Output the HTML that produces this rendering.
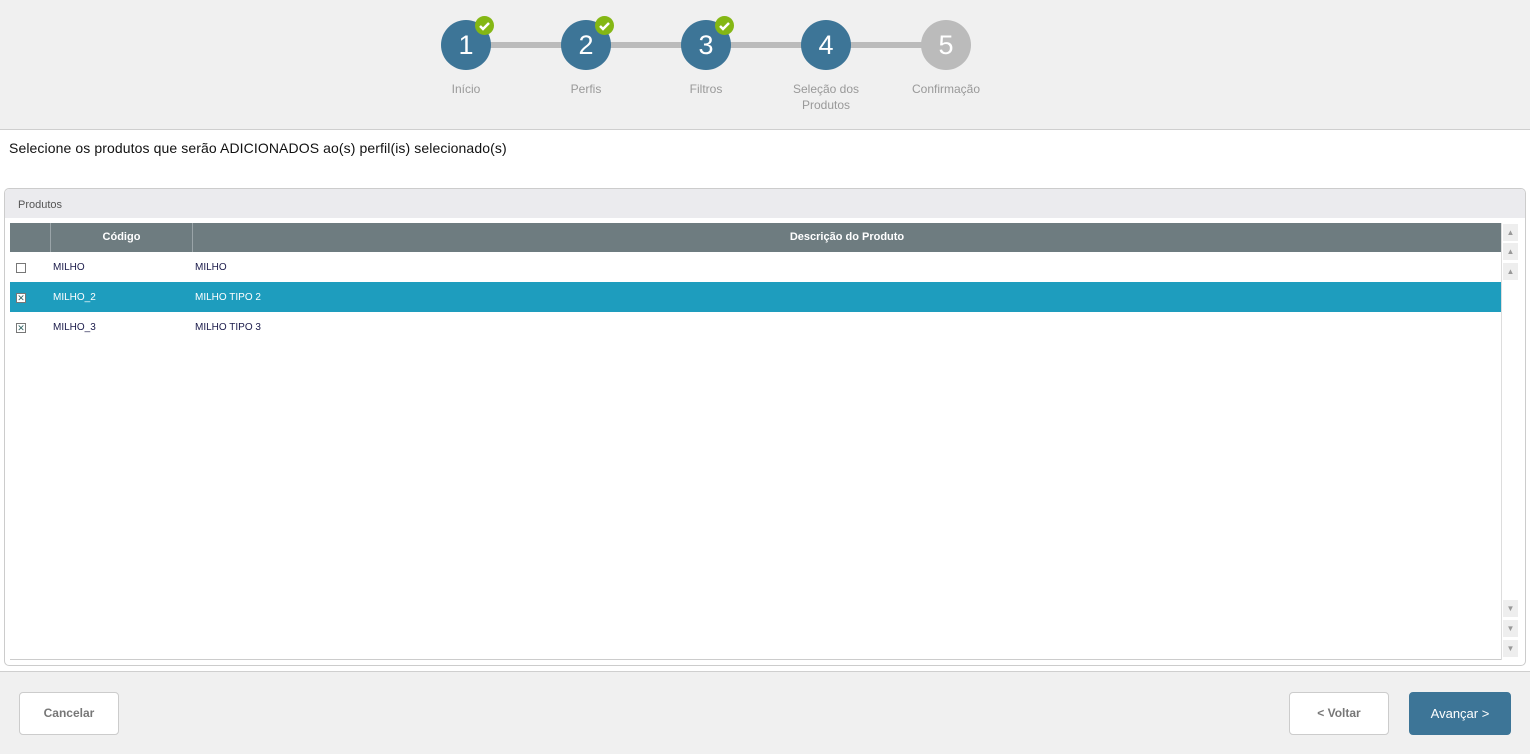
<!DOCTYPE html>
<html><head><meta charset="utf-8"><style>
*{box-sizing:border-box;margin:0;padding:0}
body{width:1530px;height:754px;background:#fff;font-family:"Liberation Sans",Arial,sans-serif;position:relative;overflow:hidden}
.hdr{position:absolute;left:0;top:0;width:1530px;height:130px;background:#f0f0f0;border-bottom:1px solid #cfcfcf}
.line{position:absolute;top:42px;height:6px;background:#bbb;left:466px;width:480px}
.c{position:absolute;top:20px;width:50px;height:50px;border-radius:50%;background:#3d7597;color:#fff;font-size:27px;text-align:center;line-height:50px}
.c.g{background:#bbb}
.ck{position:absolute;width:19px;height:19px;border-radius:50%;background:#84b714;top:16px}
.lb{position:absolute;top:81px;width:100px;text-align:center;color:#999;font-size:12px;line-height:16px}
.msg{position:absolute;left:9px;top:140px;font-size:14px;color:#111;letter-spacing:0.1px}
.panel{position:absolute;left:4px;top:188px;width:1522px;height:478px;border:1px solid #ccc;border-radius:5px;background:#fff;overflow:hidden}
.ph{height:29px;background:#ebebee;font-size:11px;color:#555;padding:10px 0 0 13px}
.gh{position:absolute;left:5px;top:34px;width:1491px;height:29px;background:#6e7c80;color:#fff;font-size:11px;font-weight:bold}
.gh div{position:absolute;top:0;height:29px;line-height:28px;text-align:center;border-left:1px solid #9aa4a8}
.row{position:absolute;left:5px;width:1491px;height:30px;font-size:10px;color:#1a1a4a}
.row span{position:absolute;top:10px}
.cb{position:absolute;left:6px;top:11px;width:10px;height:10px;border:1px solid #777;background:#fff}
.sel{background:#1e9dbe;color:#fff}
.sb{position:absolute;left:1496px;top:34px;width:17px;height:437px;background:#fff;border-left:1px solid #ddd}
.sbb{position:absolute;left:1px;width:15px;height:17px;background:#eee;color:#999;font-size:8px;text-align:center;line-height:17px}
.ftr{position:absolute;left:0;top:671px;width:1530px;height:83px;background:#f0f0f0;border-top:1px solid #cfcfcf}
.btn{position:absolute;top:20px;height:43px;border:1px solid #ccc;border-radius:4px;background:#fff;color:#777;font-weight:bold;font-size:12px;text-align:center;line-height:41px}
</style></head><body>
<div class="hdr">
<div class="line"></div>
<div class="c" style="left:441px">1</div><div class="c" style="left:561px">2</div><div class="c" style="left:681px">3</div><div class="c" style="left:801px">4</div><div class="c g" style="left:921px">5</div>
<svg class="ck" style="left:475px" viewBox="0 0 19 19"><path d="M5 10l3 3 6-6" stroke="#fff" stroke-width="2.5" fill="none"/></svg>
<svg class="ck" style="left:595px" viewBox="0 0 19 19"><path d="M5 10l3 3 6-6" stroke="#fff" stroke-width="2.5" fill="none"/></svg>
<svg class="ck" style="left:715px" viewBox="0 0 19 19"><path d="M5 10l3 3 6-6" stroke="#fff" stroke-width="2.5" fill="none"/></svg>
<div class="lb" style="left:416px">Início</div><div class="lb" style="left:536px">Perfis</div><div class="lb" style="left:656px">Filtros</div><div class="lb" style="left:776px">Seleção dos<br>Produtos</div><div class="lb" style="left:896px">Confirmação</div>
</div>
<div class="msg">Selecione os produtos que serão ADICIONADOS ao(s) perfil(is) selecionado(s)</div>
<div class="panel">
<div class="ph">Produtos</div>
<div class="gh"><div style="left:0;width:40px;border:none"></div><div style="left:40px;width:142px">Código</div><div style="left:182px;width:1309px">Descrição do Produto</div></div>
<div class="row" style="top:63px"><div class="cb"></div><span style="left:43px">MILHO</span><span style="left:185px">MILHO</span></div>
<div class="row sel" style="top:93px"><div class="cb" style="font-size:9px;line-height:8px;text-align:center;color:#366">✕</div><span style="left:43px">MILHO_2</span><span style="left:185px">MILHO TIPO 2</span></div>
<div class="row" style="top:123px"><div class="cb" style="font-size:9px;line-height:8px;text-align:center;color:#366">✕</div><span style="left:43px">MILHO_3</span><span style="left:185px">MILHO TIPO 3</span></div>
<div style="position:absolute;left:5px;top:470px;width:1491px;height:1px;background:#ccc"></div>
<div class="sb">
<div class="sbb" style="top:1px">▲</div><div class="sbb" style="top:20px">▲</div><div class="sbb" style="top:40px">▲</div>
<div class="sbb" style="top:377px">▼</div><div class="sbb" style="top:397px">▼</div><div class="sbb" style="top:417px">▼</div>
</div>
</div>
<div class="ftr">
<div class="btn" style="left:19px;width:100px">Cancelar</div>
<div class="btn" style="left:1289px;width:100px">&lt; Voltar</div>
<div class="btn" style="left:1409px;width:102px;background:#3d7597;border-color:#3d7597;color:#fff;font-weight:normal;font-size:13px">Avançar &gt;</div>
</div>
</body></html>
